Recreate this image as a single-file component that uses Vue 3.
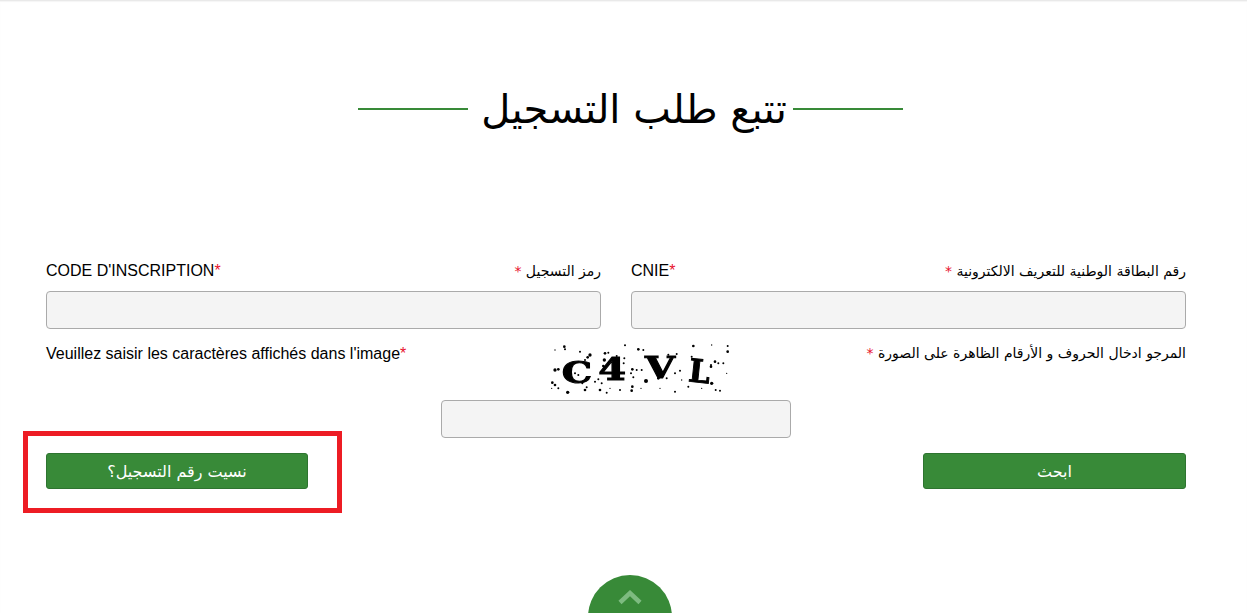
<script setup>
// Noise dots of the captcha picture: x, y, r
const dots = [
  [58,20,4],[60,28,3],[30,30,2],[105,35,3],[135,45,5],[128,52,4],[120,60,3],[180,40,4],[190,38,3],[178,60,5],
  [240,16,3],[280,28,4],[295,30,3],[238,55,3],[236,70,3],[215,48,3],[445,18,4],[500,15,2],[548,18,3],[548,35,4],
  [370,44,3],[395,42,3],[440,50,3],[510,65,4],[520,70,3],[498,80,4],[535,70,3],[545,100,2],[30,90,5],[40,88,4],
  [22,128,4],[30,135,4],[40,145,3],[68,157,5],[20,145,2],[112,130,3],[120,150,4],[125,142,3],[150,125,3],[170,130,3],
  [165,150,4],[185,158,3],[195,145,2],[262,88,4],[275,90,3],[258,100,3],[265,112,3],[290,90,3],[303,123,6],[262,140,4],
  [260,152,4],[225,150,3],[288,145,2],[340,115,4],[365,115,3],[390,100,3],[405,92,3],[410,120,2],[345,145,2],[390,155,3],
  [430,140,3],[470,145,2],[500,130,5],[498,75,3],[512,150,3],[525,152,3],[90,100,3],[100,105,3],[175,78,4],[160,118,3]
]
</script>

<template>
  <div class="page">
    <div class="heading">
      <span class="rule"></span>
      <h1 dir="rtl">تتبع طلب التسجيل</h1>
      <span class="rule"></span>
    </div>

    <form class="form" @submit.prevent>
      <div class="columns">
        <div class="field">
          <div class="label-row">
            <label>CODE D'INSCRIPTION<i>*</i></label>
            <label class="ar" dir="rtl">رمز التسجيل <i>*</i></label>
          </div>
          <input type="text" />
        </div>
        <div class="field">
          <div class="label-row">
            <label>CNIE<i>*</i></label>
            <label class="ar" dir="rtl">رقم البطاقة الوطنية للتعريف الالكترونية <i>*</i></label>
          </div>
          <input type="text" />
        </div>
      </div>

      <div class="captcha-row">
        <label>Veuillez saisir les caractères affichés dans l'image<i>*</i></label>
        <svg class="captcha" viewBox="15 9 540 156" width="180" height="52">
          <circle v-for="(d, n) in dots" :key="n" :cx="d[0]" :cy="d[1]" :r="d[2]" fill="#000" />
          <text class="glyph" transform="translate(50 130) scale(1.3 1)" font-size="88">C</text>
          <text class="glyph" transform="translate(160 120) scale(1.25 1)" font-size="96">4</text>
          <text class="glyph" transform="translate(300 115) scale(1.32 1)" font-size="88">V</text>
          <text class="glyph" transform="translate(428 124) rotate(6) scale(0.95 1)" font-size="96">L</text>
        </svg>
        <label class="ar" dir="rtl">المرجو ادخال الحروف و الأرقام الظاهرة على الصورة <i>*</i></label>
      </div>

      <div class="captcha-input">
        <input type="text" />
      </div>

      <div class="actions">
        <button type="button">نسيت رقم التسجيل؟</button>
        <button type="submit" class="search">ابحث</button>
      </div>
    </form>

    <div class="to-top">
      <svg width="24" height="16" viewBox="0 0 24 16">
        <path d="M2 13.5 12 4l10 9.5" fill="none" stroke="#7dbb80" stroke-width="4.5" />
      </svg>
    </div>

    <div class="highlight"></div>
  </div>
</template>

<style>
html, body {
  margin: 0;
  height: 100%;
  overflow: hidden;
  background: #fff;
}
</style>

<style scoped>
.page {
  position: relative;
  height: 613px;
  overflow: hidden;
  border-top: 1px solid #e9e9e9;
  box-shadow: inset 0 1px 1px rgba(0, 0, 0, 0.04);
  box-sizing: border-box;
  font-family: "Liberation Sans", Arial, sans-serif;
  font-size: 16px;
  color: #000;
}
.heading {
  display: flex;
  justify-content: center;
  align-items: center;
  height: 70px;
  margin-top: 73px;
  padding-left: 14px;
}
.heading h1 {
  margin: 0 6px 0 13px;
  font-family: "DejaVu Sans", serif;
  font-size: 40px;
  font-weight: 400;
}
.rule {
  width: 110px;
  height: 2px;
  background: #388a38;
}
.form {
  width: 1140px;
  padding: 116px 0 0 46px;
}
.columns {
  display: grid;
  grid-template-columns: 555px 555px;
  gap: 30px;
}
.label-row {
  display: flex;
  justify-content: space-between;
  height: 31px;
  padding-top: 2px;
  box-sizing: border-box;
}
label i {
  font-style: normal;
  color: #e8112d;
}
.ar {
  font-family: "DejaVu Sans", serif;
  font-size: 14px;
  margin-top: 1px;
}
input {
  display: block;
  width: 100%;
  height: 38px;
  box-sizing: border-box;
  background: #f4f4f4;
  border: 1px solid #aaa;
  border-radius: 4px;
}
.captcha-row {
  position: relative;
  display: flex;
  justify-content: space-between;
  width: 1140px;
  height: 57px;
  margin-top: 14px;
}
.captcha-row label {
  margin-top: 2px;
}
.captcha {
  position: absolute;
  left: 504px;
  top: 0;
  filter: blur(0.4px);
}
.glyph {
  font-family: "DejaVu Serif", serif;
  font-weight: 700;
  stroke: #000;
  stroke-width: 3px;
}
.captcha-input {
  display: flex;
  justify-content: center;
  width: 1140px;
}
.captcha-input input {
  width: 350px;
}
.actions {
  display: flex;
  justify-content: space-between;
  width: 1140px;
  margin-top: 15px;
}
button {
  width: 262px;
  height: 36px;
  background: #388a38;
  border: 1px solid #2e7430;
  border-radius: 3px;
  color: #fff;
  font-family: "DejaVu Sans", serif;
  font-size: 16px;
}
.search {
  width: 263px;
}
.to-top {
  position: absolute;
  left: 588px;
  top: 574px;
  width: 84px;
  height: 84px;
  border-radius: 50%;
  background: #388a38;
  display: flex;
  justify-content: center;
  padding-top: 14px;
  box-sizing: border-box;
}
.to-top svg {
  display: block;
}
.highlight {
  position: absolute;
  left: 23px;
  top: 430px;
  width: 319px;
  height: 82px;
  box-sizing: border-box;
  border: 5px solid #ed1c24;
}
</style>
